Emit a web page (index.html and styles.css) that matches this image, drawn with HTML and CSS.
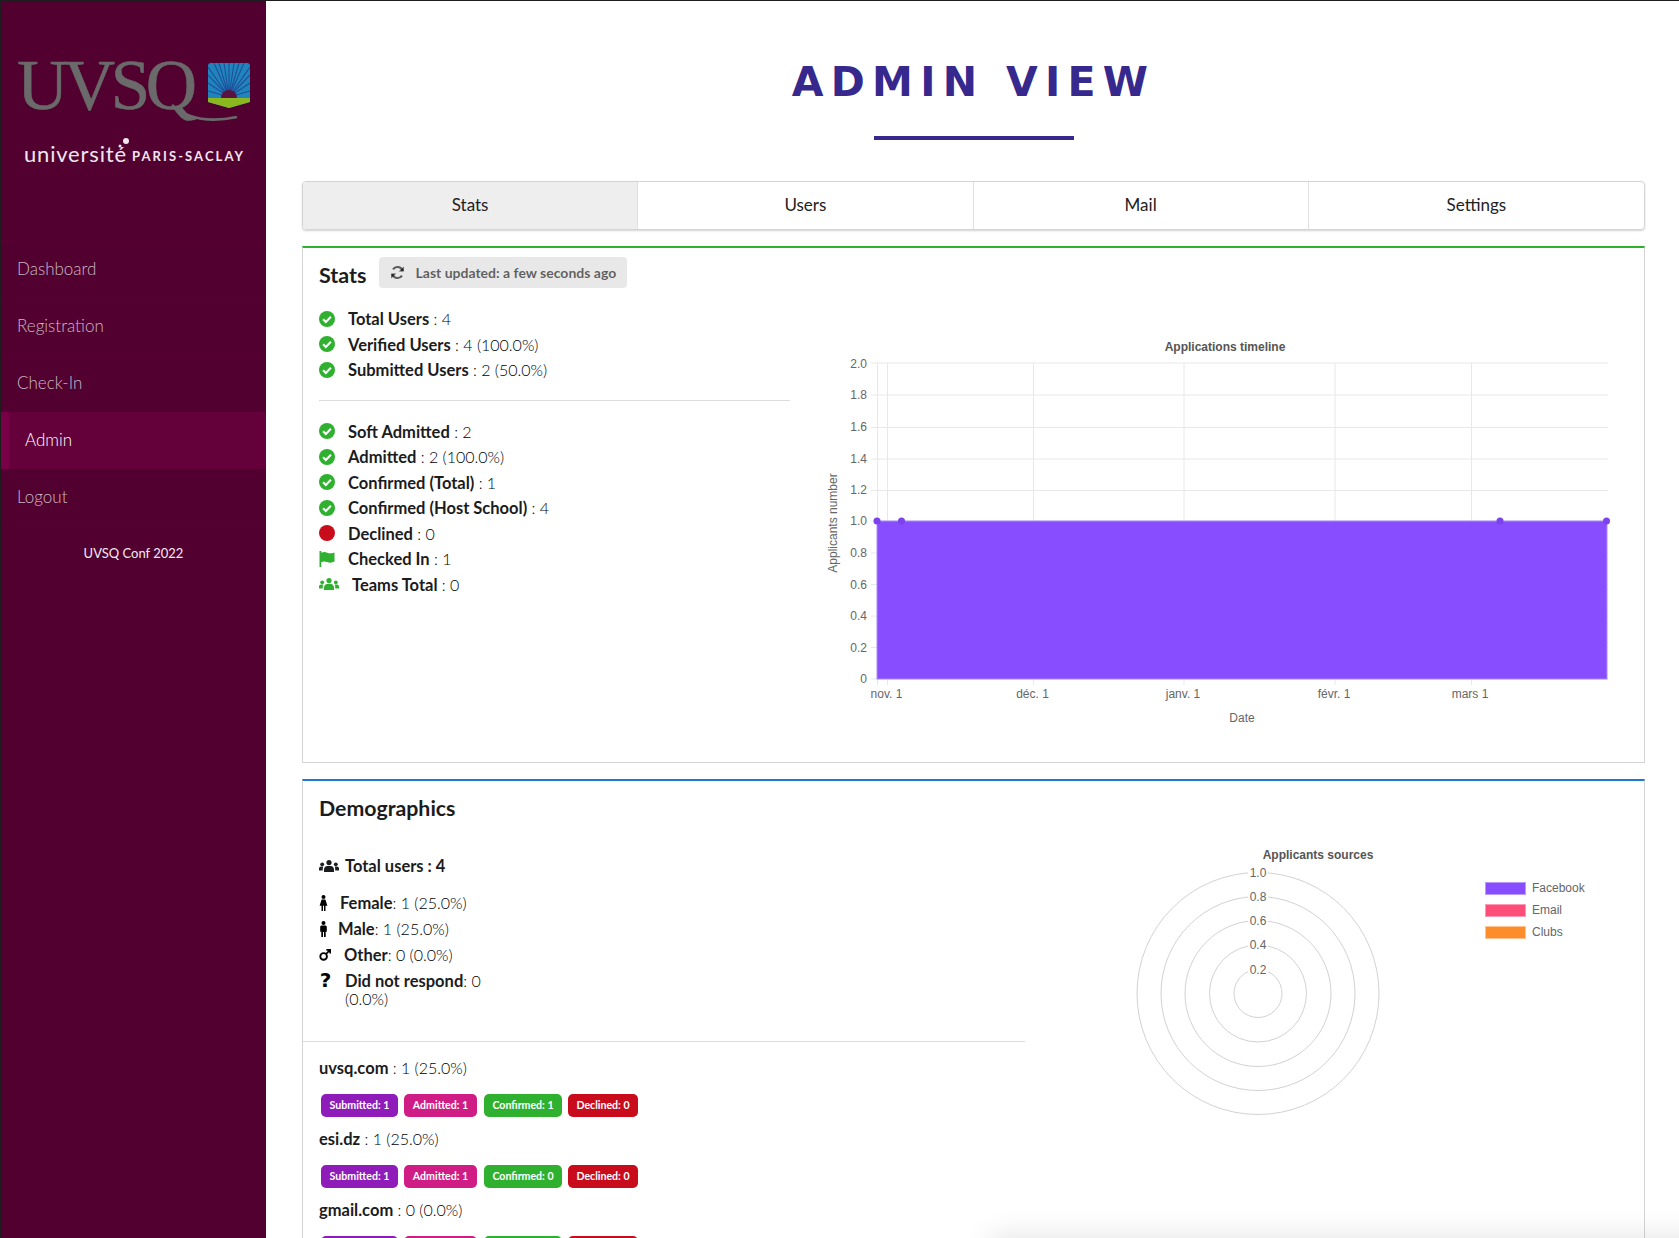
FILE: index.html
```html
<!DOCTYPE html>
<html lang="en">
<head>
    <meta charset="UTF-8">
    <title>Admin View</title>
    <link rel="stylesheet" href="styles.css">
</head>
<body>
    <svg class="icon-defs" width="0" height="0">
        <symbol id="check" viewBox="0 0 16 16">
            <circle cx="8" cy="8" r="8" fill="currentColor"/>
            <path d="M4.100 8.300l2.700 2.700 5.100-5.200" fill="none" stroke="#fff" stroke-width="2.100"/>
        </symbol>
        <symbol id="users" viewBox="0 0 20 12">
            <circle cx="10" cy="2.600" r="2.600" fill="currentColor"/>
            <circle cx="3.200" cy="4.300" r="1.900" fill="currentColor"/>
            <circle cx="16.800" cy="4.300" r="1.900" fill="currentColor"/>
            <path d="M5 12V9.500C5 7.300 6.800 6 8 6h4c1.200 0 3 1.300 3 3.500V12z" fill="currentColor"/>
            <path d="M0 10.500V8.500C0 7.300 1 6.500 2 6.500h2.300C3.700 7.300 3.800 9 3.800 10.500zM20 10.500V8.500C20 7.300 19 6.500 18 6.500h-2.300c.6.800.5 2.500.5 4z" fill="currentColor"/>
        </symbol>
    </svg>

    <aside class="sidebar">
        <svg class="logo" viewBox="0 0 265 170" width="265" height="170">
            <defs>
                <clipPath id="shield">
                    <path d="M211 62h36a3 3 0 0 1 3 3v36l-21 6-21-6V65a3 3 0 0 1 3-3z"/>
                </clipPath>
            </defs>
            <text class="logo-uvsq" x="17" y="108" textLength="180">UVSQ</text>
            <path d="M172 104c14 13 36 18 65 12" fill="none" stroke="#6a6a6a" stroke-width="2.600"/>
            <g clip-path="url(#shield)">
                <rect x="208" y="62" width="42" height="46" fill="#2184bd"/>
                <path d="M229 96L208 90M229 96L208 82M229 96L208 74M229 96L208 66M229 96L214 62M229 96L219 62M229 96L224 62M229 96L229 62M229 96L234 62M229 96L239 62M229 96L244 62M229 96L250 66M229 96L250 74M229 96L250 82M229 96L250 90" stroke="#1d4f9a" stroke-width="1.100"/>
                <path d="M221 97a8 8 0 0 1 16 0z" fill="#5a1240"/>
                <rect x="208" y="97" width="42" height="11" fill="#8ab81e"/>
            </g>
            <circle cx="126" cy="140" r="3" fill="#f2e6ee"/>
            <circle cx="120" cy="145" r="1.500" fill="#f2e6ee"/>
            <text class="logo-univ" x="24" y="161" textLength="102">université</text>
            <text class="logo-paris" x="132" y="160" textLength="111">PARIS-SACLAY</text>
        </svg>
        <nav class="menu">
            <a class="menu-item">Dashboard</a>
            <a class="menu-item">Registration</a>
            <a class="menu-item">Check-In</a>
            <a class="menu-item active">Admin</a>
            <a class="menu-item">Logout</a>
        </nav>
        <div class="sidebar-foot">UVSQ Conf 2022</div>
    </aside>

    <main class="page">
        <h1 class="page-title">ADMIN VIEW</h1>
        <div class="title-rule"></div>

        <div class="tabs">
            <a class="tab active">Stats</a>
            <a class="tab">Users</a>
            <a class="tab">Mail</a>
            <a class="tab">Settings</a>
        </div>

        <section class="segment green stats-segment">
            <div class="stats-left">
                <div class="stats-head">
                    <h2>Stats</h2>
                    <span class="updated">
                        <svg class="refresh" viewBox="0 0 16 16" width="15" height="15">
                            <path d="M13.500 6.200A5.800 5.800 0 0 0 3.200 4.600M2.500 9.800a5.800 5.800 0 0 0 10.300 1.600" fill="none" stroke="currentColor" stroke-width="2.300"/>
                            <path d="M14.800 1.500v5.500H9.300zM1.200 14.500V9h5.500z" fill="currentColor"/>
                        </svg>
                        Last updated: a few seconds ago
                    </span>
                </div>
                <ul class="stat-list">
                    <li><svg class="ico green-ico"><use href="#check"/></svg><b>Total Users</b> : 4</li>
                    <li><svg class="ico green-ico"><use href="#check"/></svg><b>Verified Users</b> : 4 (100.0%)</li>
                    <li><svg class="ico green-ico"><use href="#check"/></svg><b>Submitted Users</b> : 2 (50.0%)</li>
                </ul>
                <hr class="rule">
                <ul class="stat-list">
                    <li><svg class="ico green-ico"><use href="#check"/></svg><b>Soft Admitted</b> : 2</li>
                    <li><svg class="ico green-ico"><use href="#check"/></svg><b>Admitted</b> : 2 (100.0%)</li>
                    <li><svg class="ico green-ico"><use href="#check"/></svg><b>Confirmed (Total)</b> : 1</li>
                    <li><svg class="ico green-ico"><use href="#check"/></svg><b>Confirmed (Host School)</b> : 4</li>
                    <li><svg class="ico red-ico" viewBox="0 0 16 16"><circle cx="8" cy="8" r="8" fill="currentColor"/></svg><b>Declined</b> : 0</li>
                    <li><svg class="ico green-ico" viewBox="0 0 16 16"><path d="M.5 0h1.800v16H.5zM2.300 1.800c2.200-1 4-.8 6 0s3.800.8 7.200-.4v9.200c-3.200 1.400-5.200 1.300-7.200.5s-3.800-1-6 0z" fill="currentColor"/></svg><b>Checked In</b> : 1</li>
                    <li><svg class="ico-wide green-ico"><use href="#users"/></svg><b>Teams Total</b> : 0</li>
                </ul>
            </div>

            <svg class="timeline" viewBox="810 330 826 400" width="826" height="400">
                <text class="chart-title" x="1225" y="351" text-anchor="middle">Applications timeline</text>
                <g class="grid">
                    <path d="M871 363H1608M871 395H1608M871 427.500H1608M871 459H1608M871 490.500H1608M871 521H1608M871 553H1608M871 584.500H1608M871 616H1608M871 647.500H1608M871 679H1608"/>
                    <path d="M877.500 363V685M887.500 363V685M1033.500 363V685M1184 363V685M1335 363V685M1471.500 363V685"/>
                </g>
                <rect x="877" y="521" width="730" height="158" fill="#884dff" stroke="#a98bf5"/>
                <circle cx="877" cy="521" r="3.500" fill="#7c42ec"/>
                <circle cx="901.500" cy="521" r="3.500" fill="#7c42ec"/>
                <circle cx="1500" cy="521" r="3.500" fill="#7c42ec"/>
                <circle cx="1606.500" cy="521" r="3.500" fill="#7c42ec"/>
                <g class="tick" text-anchor="end">
                    <text x="867" y="368">2.0</text>
                    <text x="867" y="399">1.8</text>
                    <text x="867" y="431">1.6</text>
                    <text x="867" y="463">1.4</text>
                    <text x="867" y="494">1.2</text>
                    <text x="867" y="525">1.0</text>
                    <text x="867" y="557">0.8</text>
                    <text x="867" y="589">0.6</text>
                    <text x="867" y="620">0.4</text>
                    <text x="867" y="652">0.2</text>
                    <text x="867" y="683">0</text>
                </g>
                <g class="tick" text-anchor="middle">
                    <text x="886.500" y="698">nov. 1</text>
                    <text x="1032.500" y="698">déc. 1</text>
                    <text x="1183" y="698">janv. 1</text>
                    <text x="1334" y="698">févr. 1</text>
                    <text x="1470" y="698">mars 1</text>
                    <text x="1242" y="722">Date</text>
                    <text transform="translate(837 523) rotate(-90)">Applicants number</text>
                </g>
            </svg>
        </section>

        <section class="segment blue demo-segment">
            <div class="demo-left">
                <h2 class="demo-title">Demographics</h2>
                <div class="total-users"><svg class="ico-wide"><use href="#users"/></svg>Total users : 4</div>
                <ul class="gender-list">
                    <li>
                        <svg class="person" viewBox="0 0 9 16"><circle cx="4.500" cy="2" r="2" fill="currentColor"/><path d="M2.600 4.600h3.800l2 6.200H6.500V16H5v-5.200H4V16H2.500v-5.200H.6z" fill="currentColor"/></svg>
                        <span class="g-female"><b>Female</b>: 1 (25.0%)</span>
                    </li>
                    <li>
                        <svg class="person" viewBox="0 0 9 16"><circle cx="4.500" cy="2" r="2" fill="currentColor"/><path d="M1.200 6c0-1 .7-1.500 1.500-1.500h3.600c.8 0 1.500.5 1.500 1.500v4.800H6.700V16H5v-5H4v5H2.300v-5.200H1.200z" fill="currentColor"/></svg>
                        <span class="g-male"><b>Male</b>: 1 (25.0%)</span>
                    </li>
                    <li>
                        <svg class="person mars" viewBox="0 0 13 13"><circle cx="5" cy="8" r="3.600" fill="none" stroke="currentColor" stroke-width="2"/><path d="M7.500 5.500L11.500 1.500M8 .9h4.100V5" fill="none" stroke="currentColor" stroke-width="1.800"/></svg>
                        <span class="g-other"><b>Other</b>: 0 (0.0%)</span>
                    </li>
                    <li class="wrap">
                        <span class="q">?</span>
                        <span class="g-other"><b>Did not respond</b>: 0<br>(0.0%)</span>
                    </li>
                </ul>
                <hr class="rule full">
                <div class="school"><b>uvsq.com</b> : 1 (25.0%)</div>
                <div class="badges">
                    <span class="badge violet w77">Submitted: 1</span>
                    <span class="badge pink w73">Admitted: 1</span>
                    <span class="badge grass w78">Confirmed: 1</span>
                    <span class="badge red w70">Declined: 0</span>
                </div>
                <div class="school"><b>esi.dz</b> : 1 (25.0%)</div>
                <div class="badges">
                    <span class="badge violet w77">Submitted: 1</span>
                    <span class="badge pink w73">Admitted: 1</span>
                    <span class="badge grass w78">Confirmed: 0</span>
                    <span class="badge red w70">Declined: 0</span>
                </div>
                <div class="school"><b>gmail.com</b> : 0 (0.0%)</div>
                <div class="badges">
                    <span class="badge violet w77">Submitted: 0</span>
                    <span class="badge pink w73">Admitted: 0</span>
                    <span class="badge grass w78">Confirmed: 0</span>
                    <span class="badge red w70">Declined: 0</span>
                </div>
            </div>

            <svg class="sources" viewBox="1100 840 520 290" width="520" height="290">
                <text class="chart-title" x="1318" y="859" text-anchor="middle">Applicants sources</text>
                <g class="rings">
                    <circle cx="1258" cy="993.500" r="121"/>
                    <circle cx="1258" cy="993.500" r="97"/>
                    <circle cx="1258" cy="993.500" r="73"/>
                    <circle cx="1258" cy="993.500" r="48.500"/>
                    <circle cx="1258" cy="993.500" r="24"/>
                </g>
                <g class="ring-labels">
                    <rect x="1248" y="866" width="20" height="14"/>
                    <rect x="1248" y="890" width="20" height="14"/>
                    <rect x="1248" y="914" width="20" height="14"/>
                    <rect x="1248" y="938" width="20" height="14"/>
                    <rect x="1248" y="963" width="20" height="14"/>
                </g>
                <g class="tick" text-anchor="middle">
                    <text x="1258" y="877">1.0</text>
                    <text x="1258" y="901">0.8</text>
                    <text x="1258" y="925">0.6</text>
                    <text x="1258" y="949">0.4</text>
                    <text x="1258" y="974">0.2</text>
                </g>
                <rect x="1485.500" y="882.500" width="40" height="12" fill="#884dff" stroke="#b79bff"/>
                <rect x="1485.500" y="904.500" width="40" height="12" fill="#ff4d7a" stroke="#ff9ab4"/>
                <rect x="1485.500" y="926.500" width="40" height="12" fill="#fd8c2b" stroke="#ffc48f"/>
                <g class="tick">
                    <text x="1532" y="892">Facebook</text>
                    <text x="1532" y="914">Email</text>
                    <text x="1532" y="936">Clubs</text>
                </g>
            </svg>
        </section>
    </main>
    <div class="bottom-shade"></div>
</body>
</html>
```

FILE: styles.css
```css
* {
    box-sizing: border-box;
}

body {
    margin: 0;
    height: 100vh;
    overflow: hidden;
    display: flex;
    font-family: Lato, "Open Sans", sans-serif;
    font-size: 16px;
    color: #000;
    background: #fff;
    border-top: 1px solid #1d1d1d;
}

b {
    font-size: 16.5px;
    color: #1b1c1d;
}

.icon-defs {
    position: absolute;
}

/* sidebar */
.sidebar {
    flex: 0 0 266px;
    background: #510030;
    border-left: 1px solid #1d1d1d;
}

.logo {
    display: block;
    margin-left: -1px;
}

.logo-uvsq {
    font-family: "Liberation Serif", serif;
    font-size: 71px;
    fill: #6a6a6a;
    stroke: #6a6a6a;
    stroke-width: 0.6px;
}

.logo-univ {
    font-family: Lato, sans-serif;
    font-weight: 400;
    font-size: 22px;
    fill: #f2e6ee;
}

.logo-paris {
    font-family: Lato, sans-serif;
    font-weight: 700;
    font-size: 13px;
    fill: #f2e6ee;
}

.menu {
    margin-top: 69px;
    border-top: 1px solid #570033;
}

.menu-item {
    display: flex;
    align-items: center;
    height: 57px;
    padding: 0 0 2px 16px;
    font-size: 17px;
    font-weight: 300;
    color: rgba(255, 255, 255, 0.72);
    border-bottom: 1px solid #570033;
}

.menu-item.active {
    color: #fff;
    background: #64003a;
    border-left: 8px solid #770048;
    border-bottom: 0;
}

.sidebar-foot {
    margin-top: 19px;
    text-align: center;
    font-size: 13px;
    color: #f4ecf1;
}

/* main column */
.page {
    flex: 1;
    min-width: 0;
    padding: 0 34px 0 36px;
    overflow: hidden;
}

.page-title {
    margin: 56px 0 0;
    height: 49px;
    line-height: 50px;
    text-align: center;
    font-family: "DejaVu Sans", sans-serif;
    font-size: 41px;
    font-weight: 700;
    letter-spacing: 7.3px;
    color: #36288c;
}

.title-rule {
    width: 200px;
    height: 4px;
    margin: 30px auto 41px;
    background: #36288c;
}

.tabs {
    display: grid;
    grid-template-columns: repeat(4, 1fr);
    height: 49px;
    border: 1px solid #d4d4d5;
    border-radius: 4px;
    box-shadow: 0 1px 2px rgba(34, 36, 38, 0.2);
    overflow: hidden;
}

.tab {
    display: flex;
    align-items: center;
    justify-content: center;
    padding-bottom: 2px;
    font-size: 17px;
    color: #222;
    border-right: 1px solid #e0e0e1;
}

.tab:last-child {
    border-right: 0;
}

.tab.active {
    background: #eeeeee;
}

.segment {
    margin-top: 16px;
    border: 1px solid #d4d4d5;
    border-top: 2px solid #21ba45;
    display: flex;
}

.segment.green {
    border-top-color: #2fb12f;
}

.segment.blue {
    border-top-color: #1f78d1;
}

/* stats block */
.stats-segment {
    height: 517px;
    padding-left: 16px;
}

.stats-left {
    width: 471px;
    flex: none;
}

.stats-head {
    display: flex;
    align-items: center;
    margin-top: 6px;
}

.stats-head h2 {
    margin: 6px 0 0;
    font-size: 21.5px;
    line-height: 30px;
    color: #1b1c1d;
}

.updated {
    display: flex;
    align-items: center;
    gap: 11px;
    height: 31px;
    margin-left: 12px;
    padding: 0 11px 0 11px;
    font-size: 14px;
    font-weight: 700;
    color: rgba(0, 0, 0, 0.6);
    background: #e8e8e8;
    border-radius: 4px;
}

.stat-list {
    list-style: none;
    margin: 0;
    padding: 0;
}

.stats-head + .stat-list {
    margin-top: 16px;
}

.stat-list li {
    display: flex;
    align-items: baseline;
    height: 25.5px;
    line-height: 25.5px;
    font-weight: 300;
    white-space: pre;
}

.stat-list li svg {
    align-self: center;
}

.stat-list b {
    font-weight: 700;
}

.ico {
    flex: none;
    width: 16px;
    height: 16px;
    margin-right: 13px;
}

.ico-wide {
    flex: none;
    width: 20px;
    height: 12px;
    margin-right: 6px;
}

.stat-list .ico-wide {
    margin-right: 13px;
}

.green-ico {
    color: #2fb12f;
}

.red-ico {
    color: #c90c1c;
}

.rule {
    height: 1px;
    margin: 17px 0 18px;
    border: 0;
    background: #dcdcdc;
}

.timeline {
    display: block;
    flex: none;
    margin: 82px 0 0 20px;
}

.chart-title {
    font-family: "Liberation Sans", sans-serif;
    font-size: 12px;
    font-weight: 700;
    fill: #555;
}

.grid path {
    fill: none;
    stroke: #e8e8e8;
}

.tick text {
    font-family: "Liberation Sans", sans-serif;
    font-size: 12px;
    fill: #666;
}

/* demographics block */
.demo-segment {
    height: 470px;
}

.demo-left {
    width: 722px;
    flex: none;
}

.demo-title {
    margin: 12px 0 0 16px;
    font-size: 21.3px;
    line-height: 30px;
    color: #1b1c1d;
}

.total-users {
    display: flex;
    align-items: center;
    margin: 31px 0 0 16px;
    height: 24px;
    font-size: 16.5px;
    font-weight: 700;
    color: #1b1c1d;
}

.gender-list {
    list-style: none;
    margin: 12px 0 0 16px;
    padding: 0;
    font-weight: 300;
}

.gender-list b {
    font-weight: 700;
}

.gender-list li {
    display: flex;
    align-items: center;
    height: 26px;
}

.gender-list li.wrap {
    align-items: flex-start;
    height: 44px;
    line-height: 18.4px;
    padding-top: 4px;
}

.person {
    flex: none;
    width: 9px;
    height: 16px;
}

.person.mars {
    width: 12px;
    height: 12px;
}

.q {
    width: 13px;
    font-family: "DejaVu Sans", sans-serif;
    font-size: 20px;
    font-weight: 700;
    line-height: 16px;
    text-align: center;
}

.g-female {
    margin-left: 12px;
}

.g-male {
    margin-left: 10px;
}

.g-other {
    margin-left: 13px;
}

.demo-left .rule.full {
    margin: 29px 0 14px;
}

.school {
    height: 24px;
    line-height: 24px;
    margin-left: 16px;
    font-weight: 300;
}

.school b {
    font-weight: 700;
}

.badges {
    display: flex;
    margin: 14px 0 10px 18px;
}

.badge {
    height: 23px;
    line-height: 23px;
    margin-right: 6px;
    text-align: center;
    font-size: 10.6px;
    font-weight: 700;
    color: #fff;
    border-radius: 5px;
}

.w77 { width: 77px; }
.w73 { width: 73px; margin-right: 7px; }
.w78 { width: 78px; }
.w70 { width: 70px; }

.violet { background: #8f1cb8; }
.pink { background: #d01c85; }
.grass { background: #2fb12f; }
.red { background: #c90c1c; }

.sources {
    display: block;
    flex: none;
    margin: 59px 0 0 75px;
}

.rings circle {
    fill: none;
    stroke: #d2d2d2;
}

.ring-labels rect {
    fill: #fff;
}

/* faint shadow of something just below the fold */
.bottom-shade {
    position: absolute;
    left: 990px;
    right: -40px;
    top: 100vh;
    height: 20px;
    box-shadow: 0 0 30px rgba(0, 0, 0, 0.14);
}
```
